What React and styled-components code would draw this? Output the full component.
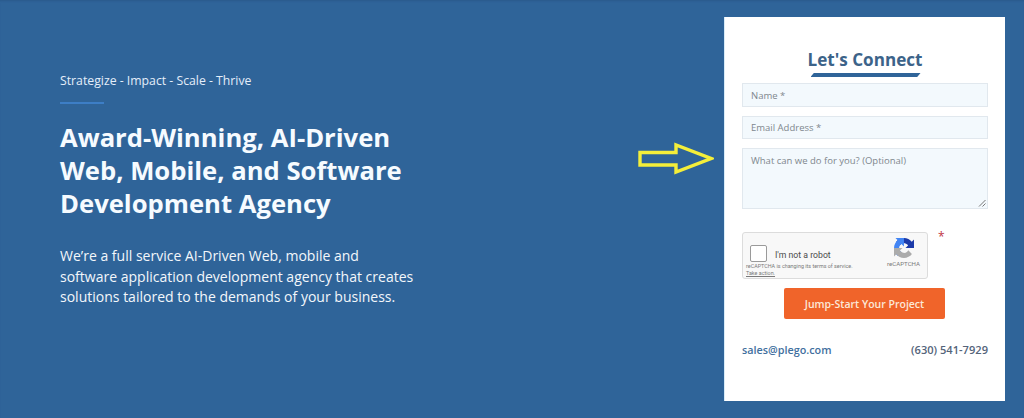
import React from "react";
import styled, { createGlobalStyle } from "styled-components";

const GlobalStyle = createGlobalStyle`
  html, body {
    margin: 0;
    padding: 0;
    background: #2f6499;
    font-family: "Open Sans", "Liberation Sans", sans-serif;
  }
  * {
    box-sizing: border-box;
  }
`;

const App = () => {
  return (
    <>
      <GlobalStyle />
      <Page>
        <Intro>
          <Tagline>Strategize - Impact - Scale - Thrive</Tagline>
          <Rule />
          <Headline>
            Award-Winning, AI-Driven
            <br />
            Web, Mobile, and Software
            <br />
            Development Agency
          </Headline>
          <Lead>
            We’re a full service AI-Driven Web, mobile and
            <br />
            software application development agency that creates
            <br />
            solutions tailored to the demands of your business.
          </Lead>
        </Intro>
        <Arrow viewBox="0 0 76 34" aria-hidden="true">
          <path
            d="M2 10.500H38V3L73 16.500L38 30V23H2Z"
            fill="none"
            stroke="#f4ee3a"
            strokeWidth="3.400"
          />
        </Arrow>
        <Card>
          <Title>Let's Connect</Title>
          <TitleBar />
          <Fields>
            <Field $height={24}>Name *</Field>
            <Field $height={23}>Email Address *</Field>
            <TextArea>
              What can we do for you? (Optional)
              <Grip viewBox="0 0 8 8" aria-hidden="true">
                <path d="M1 7.500L7.500 1M4.500 7.500L7.500 4.500" stroke="#777" strokeWidth="1" />
              </Grip>
            </TextArea>
          </Fields>
          <CaptchaRow>
            <Captcha>
              <CaptchaMain>
                <CheckBox />
                <RobotText>I'm not a robot</RobotText>
              </CaptchaMain>
              <CaptchaNote>
                reCAPTCHA is changing its terms of service.
                <br />
                <u>Take action.</u>
              </CaptchaNote>
              <CaptchaBrand>
                <svg width="20" height="20" viewBox="0 0 64 64" aria-hidden="true">
                  <path
                    d="M64 31.955l-.033-1.37V4.687l-7.16 7.16C50.948 4.674 42.033.093 32.05.093c-10.4 0-19.622 4.96-25.458 12.64l11.736 11.86a15.55 15.55 0 0 1 4.75-5.33c2.05-1.6 4.952-2.908 8.97-2.908.486 0 .86.057 1.136.163 4.982.393 9.3 3.142 11.844 7.13l-8.307 8.307c10.52-.04 22.4-.066 27.268.002"
                    fill="#1c3aa9"
                  />
                  <path
                    d="M31.955.001l-1.37.033H4.687l7.16 7.16C4.674 13.053.093 21.968.093 31.95c0 10.4 4.96 19.622 12.64 25.458l11.86-11.736a15.55 15.55 0 0 1-5.33-4.75c-1.6-2.05-2.908-4.952-2.908-8.97 0-.486.057-.86.163-1.136.393-4.982 3.142-9.3 7.13-11.844l8.307 8.307c-.04-10.52-.066-22.4.002-27.268"
                    fill="#4285f4"
                  />
                  <path
                    d="M.001 32.045l.033 1.37v25.898l7.16-7.16c5.858 7.173 14.773 11.754 24.755 11.754 10.4 0 19.622-4.96 25.458-12.64L45.67 39.407a15.55 15.55 0 0 1-4.75 5.33c-2.05 1.6-4.952 2.908-8.97 2.908-.486 0-.86-.057-1.136-.163-4.982-.393-9.3-3.142-11.844-7.13l8.307-8.307c-10.52.04-22.4.066-27.268-.002"
                    fill="#ababab"
                  />
                </svg>
                <BrandName>reCAPTCHA</BrandName>
              </CaptchaBrand>
            </Captcha>
            <Required>*</Required>
          </CaptchaRow>
          <Submit>Jump-Start Your Project</Submit>
          <Contact>
            <Email>sales@plego.com</Email>
            <Phone>(630) 541-7929</Phone>
          </Contact>
        </Card>
      </Page>
    </>
  );
};

export default App;

const Page = styled.div`
  display: flex;
  align-items: flex-start;
  width: 1024px;
  height: 418px;
  padding: 17px 19px 0 60px;
  overflow: hidden;
  background: #2f6499;
  box-shadow: inset 0 2px 2px -1px #2a5a8c;
`;

const Intro = styled.div`
  width: 578px;
  padding-top: 55px;
  color: #fff;
`;

const Tagline = styled.div`
  font-size: 12.250px;
  line-height: 18px;
  color: #e4eefa;
`;

const Rule = styled.div`
  width: 44px;
  height: 2px;
  margin-top: 12px;
  background: #3d7ec6;
`;

const Headline = styled.h1`
  margin: 17px 0 0;
  font-size: 25.650px;
  line-height: 33px;
  font-weight: 700;
  color: #f6fbff;
`;

const Lead = styled.p`
  margin: 26px 0 0;
  font-size: 14.030px;
  line-height: 20.500px;
  color: #f3f7fb;
`;

const Arrow = styled.svg`
  flex: none;
  width: 76px;
  height: 34px;
  margin-top: 125px;
`;

const Card = styled.div`
  display: flex;
  flex-direction: column;
  flex: none;
  width: 281px;
  height: 384px;
  margin-left: 10px;
  padding: 33px 17px 0;
  background: #fff;
  border-left: 1px solid #d9ecf8;
`;

const Title = styled.h2`
  margin: 0;
  text-align: center;
  font-size: 17.100px;
  line-height: 20px;
  font-weight: 700;
  color: #3c6389;
`;

const TitleBar = styled.div`
  align-self: center;
  width: 110px;
  height: 4px;
  margin-top: 3px;
  margin-left: 1px;
  background: #2f6499;
  clip-path: polygon(3% 0, 100% 0, 97% 100%, 0 100%);
`;

const Fields = styled.div`
  display: flex;
  flex-direction: column;
  gap: 9px;
  margin-top: 6px;
`;

const Field = styled.div`
  display: flex;
  align-items: center;
  height: ${(p) => p.$height}px;
  padding: 0 8px;
  background: #f3f9fd;
  border: 1px solid #e1e8ee;
  font-size: 9.500px;
  color: #80878d;
`;

const TextArea = styled.div`
  position: relative;
  height: 61px;
  padding: 5px 8px 0;
  background: #f3f9fd;
  border: 1px solid #e1e8ee;
  font-size: 9.500px;
  line-height: 14px;
  color: #80878d;
`;

const Grip = styled.svg`
  position: absolute;
  right: 1px;
  bottom: 1px;
  width: 8px;
  height: 8px;
`;

const CaptchaRow = styled.div`
  display: flex;
  margin-top: 23px;
`;

const Captcha = styled.div`
  position: relative;
  display: flex;
  justify-content: space-between;
  width: 186px;
  height: 47px;
  padding: 0 7px;
  background: #f8f8f8;
  border: 1px solid #dcdcdc;
  border-radius: 3px;
`;

const CaptchaMain = styled.div`
  display: flex;
  align-items: center;
  height: 17px;
  margin-top: 12px;
`;

const CheckBox = styled.div`
  width: 17px;
  height: 17px;
  background: #fff;
  border: 1px solid #9a9a9a;
  border-radius: 2px;
`;

const RobotText = styled.span`
  margin-left: 8px;
  padding-top: 2px;
  font-family: "Roboto", sans-serif;
  font-size: 8.700px;
  color: #4a4a4a;
`;

const CaptchaNote = styled.div`
  position: absolute;
  left: 3px;
  top: 30px;
  font-family: "Roboto", sans-serif;
  font-size: 5.400px;
  line-height: 7px;
  color: #7a7a7a;
`;

const CaptchaBrand = styled.div`
  display: flex;
  flex-direction: column;
  align-items: center;
  margin-top: 5px;
`;

const BrandName = styled.span`
  margin-top: 2px;
  font-family: "Roboto", sans-serif;
  font-size: 6.100px;
  line-height: 8px;
  color: #7a7a7a;
`;

const Required = styled.span`
  margin-left: 10px;
  font-size: 12px;
  line-height: 10px;
  color: #c0333f;
`;

const Submit = styled.button`
  align-self: center;
  width: 161px;
  height: 31px;
  margin-top: 9px;
  margin-right: 1px;
  padding: 0;
  border: 0;
  border-radius: 2px;
  background: #f0642a;
  font-family: inherit;
  font-size: 10.500px;
  font-weight: 600;
  color: #fce8d8;
`;

const Contact = styled.div`
  display: flex;
  justify-content: space-between;
  margin-top: 23px;
  line-height: 16px;
  font-weight: 600;
`;

const Email = styled.span`
  font-size: 10.800px;
  color: #3f6f9e;
`;

const Phone = styled.span`
  font-size: 11.100px;
  color: #54647a;
`;
